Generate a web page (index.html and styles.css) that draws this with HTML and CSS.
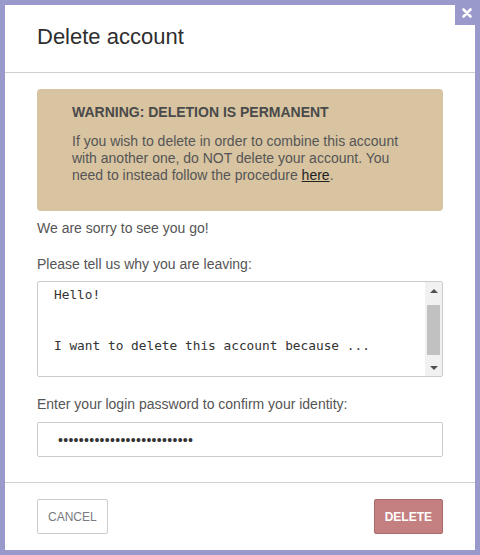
FILE: index.html
```html
<!DOCTYPE html>
<html lang="en">
<head>
  <meta charset="UTF-8">
  <title>Delete account</title>
  <link rel="stylesheet" href="styles.css">
</head>
<body>

<div class="modal">
  <button class="close-btn" title="Close">
    <svg width="10" height="10" viewBox="0 0 10 10">
      <path d="M1.5 1.5 L8.5 8.5 M8.5 1.5 L1.5 8.5" stroke="#fff" stroke-width="2.6" stroke-linecap="round"/>
    </svg>
  </button>

  <div class="modal-header">
    <h2>Delete account</h2>
  </div>

  <div class="modal-body">
    <div class="warning">
      <h4>WARNING: DELETION IS PERMANENT</h4>
      <p>If you wish to delete in order to combine this account with another one, do NOT delete your account. You need to instead follow the procedure <a href="#">here</a>.</p>
    </div>

    <p class="sorry">We are sorry to see you go!</p>

    <label for="reason">Please tell us why you are leaving:</label>
    <div class="textarea-wrap">
      <textarea id="reason">Hello!


I want to delete this account because ...


</textarea>
      <!-- barre de défilement dessinée à la main -->
      <div class="scrollbar">
        <span class="arrow arrow-up"></span>
        <span class="thumb"></span>
        <span class="arrow arrow-down"></span>
      </div>
    </div>

    <label for="password" class="pw-label">Enter your login password to confirm your identity:</label>
    <input type="password" id="password" value="abcdefghijklmnopqrstuvwxyz">
  </div>

  <div class="modal-footer">
    <button class="btn btn-cancel">CANCEL</button>
    <button class="btn btn-delete">DELETE</button>
  </div>
</div>

</body>
</html>
```

FILE: styles.css
```css
body {
  margin: 0;
  padding: 5px;
  height: 555px;
  box-sizing: border-box;
  background-color: #9999cc;
  font-family: "Liberation Sans", Arial, sans-serif;
  color: #555;
}

.modal {
  position: relative;
  background-color: #fff;
  height: 545px;
  display: flex;
  flex-direction: column;
}

.close-btn {
  position: absolute;
  top: 0;
  right: 0;
  width: 20px;
  height: 20px;
  padding: 0 0 4px 4px;
  border: none;
  background-color: #9999cc;
  display: flex;
  align-items: center;
  justify-content: center;
  cursor: pointer;
}

.modal-header {
  padding: 20px 32px 23px;
  border-bottom: 1px solid #cfcfd6;
}

.modal-header h2 {
  margin: 0;
  font-size: 22px;
  line-height: 24px;
  font-weight: normal;
  color: #2e2e2e;
}

.modal-body {
  padding: 16px 32px 25px;
  display: flex;
  flex-direction: column;
  font-size: 14px;
  line-height: 17px;
}

.warning {
  background-color: #d8c4a1;
  border-radius: 4px;
  padding: 15px 35px 27px;
}

.warning h4 {
  margin: 0 0 13px;
  font-size: 14px;
  line-height: 16px;
  color: #4a4a4a;
}

.warning p {
  margin: 0;
}

.warning a {
  color: #222;
}

.sorry {
  margin: 9px 0 19px;
}

label {
  margin-bottom: 8px;
}

.pw-label {
  margin-top: 19px;
  margin-bottom: 9px;
}

.textarea-wrap {
  position: relative;
  display: flex;
}

textarea {
  flex: 1;
  height: 96px;
  box-sizing: border-box;
  border: 1px solid #ccc;
  border-radius: 2px;
  padding: 4px 16px;
  font-family: "DejaVu Sans Mono", "Liberation Mono", monospace;
  font-size: 12.8px;
  line-height: 17px;
  color: #333;
  resize: none;
  overflow: hidden;
}

.scrollbar {
  position: absolute;
  top: 1px;
  right: 1px;
  bottom: 1px;
  width: 17px;
  background-color: #f1f1f1;
  display: flex;
  flex-direction: column;
  align-items: center;
}

.arrow {
  width: 0;
  height: 0;
  border-left: 4px solid transparent;
  border-right: 4px solid transparent;
}

.arrow-up {
  margin: 7px 0 9px;
  border-bottom: 4px solid #505050;
}

.arrow-down {
  margin: auto 0 6px;
  border-top: 4px solid #505050;
}

.thumb {
  width: 13px;
  height: 50px;
  margin-top: 3px;
  background-color: #c1c1c1;
}

input[type="password"] {
  height: 35px;
  box-sizing: border-box;
  border: 1px solid #ccc;
  border-radius: 2px;
  padding: 0 20px;
  font-family: "Liberation Sans", Arial, sans-serif;
  font-size: 14px;
  letter-spacing: 0.3px;
  color: #333;
}

.modal-footer {
  border-top: 1px solid #cfcfd6;
  padding: 16px 32px;
  display: flex;
  justify-content: space-between;
}

.btn {
  height: 35px;
  padding: 0 10px;
  border-radius: 2px;
  font-family: "Liberation Sans", Arial, sans-serif;
  font-size: 12px;
  cursor: pointer;
}

.btn-cancel {
  background-color: #fff;
  border: 1px solid #ccc;
  color: #7a7a80;
}

.btn-delete {
  background-color: #c48080;
  border: 1px solid #aa6a6a;
  color: #fff;
  font-weight: bold;
}
```
